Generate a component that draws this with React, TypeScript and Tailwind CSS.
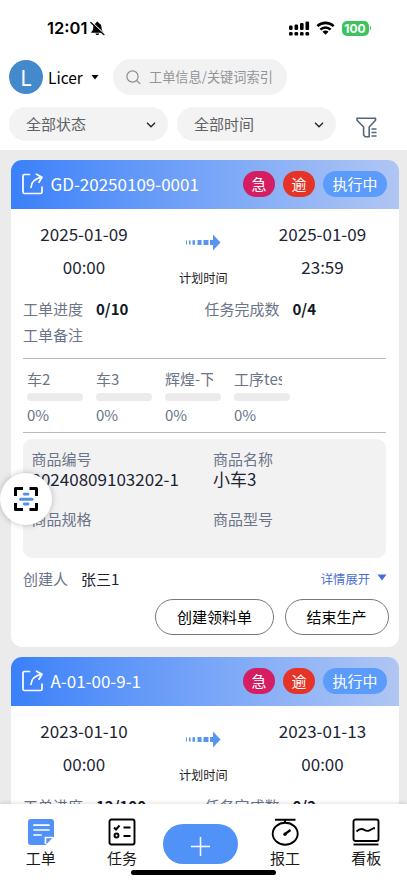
import { useState } from "react";

type Step = { name: string; percent: number };

type WorkOrder = {
  code: string;
  start: [string, string];
  end: [string, string];
  progress: string;
  tasks: string;
  steps: Step[];
  productCode: string;
  productName: string;
  creator: string;
};

const orders: WorkOrder[] = [
  {
    code: "GD-20250109-0001",
    start: ["2025-01-09", "00:00"],
    end: ["2025-01-09", "23:59"],
    progress: "0/10",
    tasks: "0/4",
    steps: [
      { name: "车2", percent: 0 },
      { name: "车3", percent: 0 },
      { name: "辉煌-下", percent: 0 },
      { name: "工序test", percent: 0 },
    ],
    productCode: "20240809103202-1",
    productName: "小车3",
    creator: "张三1",
  },
  {
    code: "A-01-00-9-1",
    start: ["2023-01-10", "00:00"],
    end: ["2023-01-13", "00:00"],
    progress: "12/100",
    tasks: "0/2",
    steps: [],
    productCode: "",
    productName: "",
    creator: "",
  },
];

function StatusBar() {
  return (
    <div className="h-[59px] flex items-start justify-between pl-[47px] pr-[36px] pt-[18px]">
      <div className="flex items-center h-5">
        <span className="font-['Inter'] text-[16.5px] font-semibold">12:01</span>
        <svg className="ml-[3px]" width="15" height="15" viewBox="0 0 15 15">
          <path d="M7.300 .8c.8 0 1.200.5 1.200 1.100 2 .6 3 2.200 3 4.300 0 2.700.7 3.700 2 4.700v.8H1.200v-.8c1.300-1 2-2 2-4.700 0-2.100 1-3.700 3-4.300 0-.6.300-1.100 1.100-1.100zM5.500 12.500h3.700c-.2 1-.9 1.600-1.800 1.600s-1.700-.6-1.900-1.600z" fill="#000" />
          <path d="M1.200 .8l13 12" stroke="#fff" strokeWidth="1.200" />
          <path d="M.8 1.500l13.200 12.200" stroke="#000" strokeWidth="1.200" strokeLinecap="round" />
        </svg>
      </div>
      <div className="flex items-center h-5">
        <svg width="22" height="15" viewBox="0 0 22 15">
          <rect x="1" y="4.500" width="3.600" height="4.500" rx="1.200" />
          <rect x="6.500" y="3.500" width="3.600" height="5.500" rx="1.200" />
          <rect x="12" y="2" width="3.600" height="7" rx="1.200" />
          <rect x="17.500" y="0.500" width="3.600" height="8.500" rx="1.200" />
          <rect x="1" y="11" width="3.600" height="3.600" rx="1.200" />
          <rect x="6.500" y="11" width="3.600" height="3.600" rx="1.200" />
          <rect x="12" y="11" width="3.600" height="3.600" rx="1.200" />
          <rect x="17.500" y="11" width="3.600" height="3.600" rx="1.200" />
        </svg>
        <svg className="ml-[6px]" width="19" height="14" viewBox="0 0 19 14">
          <path d="M1.400 5.200a11.500 11.500 0 0 1 16.200 0" fill="none" stroke="#000" strokeWidth="2.600" />
          <path d="M4.400 8.600a7.200 7.200 0 0 1 10.200 0" fill="none" stroke="#000" strokeWidth="2.600" />
          <path d="M9.500 13.700L6.500 10.700a4.200 4.200 0 0 1 6 0z" />
        </svg>
        <span className="ml-[7px] w-[27px] h-[15px] rounded-[5px] bg-[#3bc45b] text-white font-['Inter'] text-[12px] leading-[15px] font-bold text-center">100</span>
        <span className="ml-px w-[1.5px] h-[4px] rounded-r bg-[#3bc45b]" />
      </div>
    </div>
  );
}

function FilterSelect({ label }: { label: string }) {
  return (
    <button className="w-[159px] h-[34px] rounded-full bg-[#f3f3f3] flex items-center justify-between pl-[17px] pr-[12px] pt-px text-[15px] text-[#606266]">
      {label}
      <svg width="10" height="6" viewBox="0 0 10 6" fill="none" stroke="#222" strokeWidth="1.300">
        <path d="M1 .8l4 4 4-4" />
      </svg>
    </button>
  );
}

function Header() {
  return (
    <header className="h-[150px] shrink-0 bg-white">
      <StatusBar />
      <div className="flex items-center h-9 pl-[9px]">
        <div className="w-[34px] h-[34px] rounded-full bg-[#4489cc] text-white text-[21px] leading-[35px] text-center">L</div>
        <span className="ml-[5px] mt-px w-[34px] text-[15.5px] text-black">Licer</span>
        <svg className="ml-[9px]" width="8" height="5" viewBox="0 0 8 5">
          <path d="M.5 0h7L4 4.500z" />
        </svg>
        <div className="ml-[14px] w-[174px] h-9 rounded-full bg-[#f2f2f2] flex items-center pl-[13px] text-[13.2px] text-[#919499]">
          <svg className="mr-[8px]" width="15" height="15" viewBox="0 0 15 15" fill="none" stroke="#8b8e93" strokeWidth="1.200">
            <circle cx="6.500" cy="6.500" r="5.600" />
            <path d="M10.500 10.500l3.800 3.400" />
          </svg>
          工单信息/关键词索引
        </div>
      </div>
      <div className="flex items-center mt-3 h-[34px] pl-[9px] gap-[9px]">
        <FilterSelect label="全部状态" />
        <FilterSelect label="全部时间" />
        <svg className="ml-[11px] mt-[7px]" width="22" height="22" viewBox="0 0 22 22" fill="none" stroke="#53657d" strokeWidth="1.600">
          <path d="M1 1.300h18.500v2L13.200 10v9.700H9.200L7.600 18V10L1 3.300z" strokeLinejoin="round" />
          <path d="M15.500 12h5M15.500 15.500h5M15.500 19h5" />
        </svg>
      </div>
    </header>
  );
}

function DateBlock({ value }: { value: [string, string] }) {
  return (
    <div className="w-[122px] text-center text-[17px] leading-[33px] text-[#1d2433]">
      <p>{value[0]}</p>
      <p>{value[1]}</p>
    </div>
  );
}

function Field({ label, value }: { label: string; value?: string }) {
  return (
    <div className="h-[60px]">
      <p className="text-[15px] leading-5 text-[#6b7489]">{label}</p>
      {value && <p className="text-[17px] leading-5 text-[#1d2433] whitespace-nowrap">{value}</p>}
    </div>
  );
}

function OrderCard({ order }: { order: WorkOrder }) {
  return (
    <article className="h-[487px] shrink-0 rounded-[11px] bg-white overflow-hidden">
      <div className="h-[48.500px] flex items-center pl-[11px] pr-[12px] bg-linear-to-r from-[#3a80f9] to-[#b0c6f3] text-white">
        <svg width="21" height="22" viewBox="0 0 21 22" fill="none" stroke="#fff" strokeWidth="1.700" strokeLinecap="round" strokeLinejoin="round">
          <path d="M7.500 1.500H2.500a1.500 1.500 0 0 0-1.500 1.500v16a1.500 1.500 0 0 0 1.500 1.500h16a1.500 1.500 0 0 0 1.500-1.500v-5" />
          <path d="M9 14.500c.2-5 3-8.500 10.500-10.300M14.500 1.200l5.500 3-3 5" />
        </svg>
        <span className="ml-[7.500px] flex-1 text-[17px] leading-6">{order.code}</span>
        <div className="flex gap-[8px] text-[15px] leading-[26px] text-center">
          <span className="w-8 h-[26px] rounded-full bg-[#d51d62]">急</span>
          <span className="w-8 h-[26px] rounded-full bg-[#e53427]">逾</span>
          <span className="w-16 h-[26px] rounded-full bg-[#5a9bfb]">执行中</span>
        </div>
      </div>

      <div className="h-[74.500px] flex justify-between pl-[12px] pr-[15.500px] pt-[8.500px]">
        <DateBlock value={order.start} />
        <div className="flex flex-col items-center">
          <svg className="mt-[17px] shrink-0" width="36" height="17" viewBox="0 0 36 17" fill="#5795ee">
            <path d="M1 6.500h1v4H1zM4 6.500h1.600v4H4zM7.500 6.200h2.500v4.600H7.500zM12.500 6h4v5h-4zM18.500 6h5v5h-5zM25 6h3V.5L35.500 8.500 28 16.500V11h-3z" />
          </svg>
          <span className="mt-[17px] text-[12.200px] leading-5 text-[#222]">计划时间</span>
        </div>
        <DateBlock value={order.end} />
      </div>

      <div className="mx-[12px] mt-[13px] text-[15px] leading-[26px] text-[#6b7489]">
        <div className="flex">
          <p className="w-[181.500px]">工单进度<b className="ml-[13px] text-[#111827]">{order.progress}</b></p>
          <p>任务完成数<b className="ml-[13px] text-[#111827]">{order.tasks}</b></p>
        </div>
        <p>工单备注</p>
      </div>

      <div className="ml-[12px] mr-[13px] mt-[10px] h-[75px] border-y border-[#b9b9bb] flex gap-[13.500px] pl-[4px] pt-[10px]">
        {order.steps.map((s) => (
          <div key={s.name} className="w-[55.500px] text-[15px] leading-5 text-[#6b7489]">
            <p className="w-[48px] overflow-hidden whitespace-nowrap">{s.name}</p>
            <div className="mt-[4px] h-2 rounded-full bg-[#ebebeb] overflow-hidden">
              <div className="h-full bg-[#5a9bfb]" style={{ width: `${s.percent}%` }} />
            </div>
            <p className="mt-[4px]">{s.percent}%</p>
          </div>
        ))}
      </div>

      <div className="ml-[12px] mr-[13px] mt-[6px] h-[119px] rounded-[9px] bg-[#f2f2f2] grid grid-cols-[181.500px_1fr] content-start pt-[10px] pl-[8.500px]">
        <Field label="商品编号" value={order.productCode} />
        <Field label="商品名称" value={order.productName} />
        <Field label="商品规格" />
        <Field label="商品型号" />
      </div>

      <div className="mx-[12px] mt-[10px] h-[22px] flex items-center text-[15px] text-[#6b7489]">
        创建人
        <span className="ml-[13px] flex-1 text-[#1d2433]">{order.creator}</span>
        <span className="text-[12.300px] text-[#4a70cf]">详情展开</span>
        <svg className="ml-[7px] mb-[4px]" width="10" height="7" viewBox="0 0 10 7">
          <path d="M.5.500h9L5 6.500z" fill="#3f70d8" />
        </svg>
      </div>

      <div className="mt-[9px] mr-[10.500px] flex justify-end gap-[10.500px] text-[15px] text-black">
        <button className="w-[119px] h-9 rounded-full border border-[#777]">创建领料单</button>
        <button className="w-[104px] h-9 rounded-full border border-[#777]">结束生产</button>
      </div>
    </article>
  );
}

function ScanButton() {
  return (
    <button className="absolute left-0 top-[473px] w-[52px] h-[52px] rounded-full bg-white shadow-[0_0_6px_rgba(0,0,0,0.25)] flex items-center justify-center">
      <svg width="24" height="24" viewBox="0 0 24 24" fill="none">
        <path d="M1.500 9V1.500H9M15.500 1.500h7V9M22.500 16v6.500h-7M9 22.500H1.500V16" stroke="#000" strokeWidth="3" strokeLinejoin="round" />
        <path d="M6.500 12.200h11.500" stroke="#5591e0" strokeWidth="3" strokeLinecap="round" />
        <path d="M10.300 7.200h3.700M10.300 17h3.700" stroke="#5591e0" strokeWidth="2.800" strokeLinecap="round" />
      </svg>
    </button>
  );
}

const tabs = [
  {
    key: "order",
    label: "工单",
    icon: (
      <svg width="28" height="28" viewBox="0 0 28 28" fill="none">
        <path d="M4 1h20a3 3 0 0 1 3 3v14.500L18.500 27H4a3 3 0 0 1-3-3V4a3 3 0 0 1 3-3z" fill="#5092f7" />
        <path d="M7 7.200h15M7 12h15M7 17h7" stroke="#fff" strokeWidth="1.700" strokeLinecap="round" />
        <path d="M18.500 26v-6.500H26" stroke="#fff" strokeWidth="1.700" />
      </svg>
    ),
  },
  {
    key: "task",
    label: "任务",
    icon: (
      <svg width="28" height="28" viewBox="0 0 28 28" fill="none" stroke="#000" strokeWidth="1.900">
        <rect x="1.500" y="1.500" width="25" height="25" rx="2" />
        <path d="M6 9.500l2 2 3.500-4M15.500 9.500h7M15.500 18h7" />
        <circle cx="8.500" cy="17.500" r="2" />
      </svg>
    ),
  },
  { key: "add", label: "", icon: null },
  {
    key: "report",
    label: "报工",
    icon: (
      <svg width="28" height="28" viewBox="0 0 28 28" fill="none" stroke="#000" strokeWidth="1.900">
        <path d="M4 1.800h20.500M14 2v3" />
        <ellipse cx="14.200" cy="15.800" rx="12.500" ry="11" />
        <path d="M14 16l5.500-4" strokeWidth="2.200" />
        <circle cx="14" cy="16.300" r="1.700" fill="#000" stroke="none" />
      </svg>
    ),
  },
  {
    key: "board",
    label: "看板",
    icon: (
      <svg width="28" height="28" viewBox="0 0 28 28" fill="none" stroke="#000" strokeWidth="1.900">
        <rect x="1.500" y="1.500" width="25" height="21.500" rx="2" />
        <path d="M4.500 13.500c3-3 5-3.500 8-1.500s5 .5 9-1.800h1.500" />
        <path d="M1.500 26.500h25" />
      </svg>
    ),
  },
];

function TabBar({ active, onChange }: { active: string; onChange: (key: string) => void }) {
  return (
    <nav className="relative h-[79px] shrink-0 bg-white shadow-[0_-1px_4px_rgba(0,0,0,0.12)]">
      <div className="flex">
        {tabs.map((t) =>
          t.key === "add" ? (
            <button key={t.key} aria-label="新建" className="mt-[20px] mr-[6px] w-[75.500px] h-10 rounded-full bg-[#5092f7] flex items-center justify-center">
              <svg className="mt-[5px]" width="19" height="19" viewBox="0 0 19 19" stroke="#fff" strokeWidth="1.500">
                <path d="M9.500 0v19M0 9.500h19" />
              </svg>
            </button>
          ) : (
            <button
              key={t.key}
              onClick={() => onChange(t.key)}
              aria-pressed={t.key === active}
              className="flex-1 flex flex-col items-center pt-[14px] text-[15px] leading-[22px] text-[#1a1a1a]"
            >
              {t.icon}
              <span className="mt-px">{t.label}</span>
            </button>
          )
        )}
      </div>
      <div className="absolute left-[131px] bottom-[8px] w-[145px] h-[5px] rounded-full bg-black" />
    </nav>
  );
}

export default function App() {
  const [tab, setTab] = useState("order");

  return (
    <div className="relative w-[407px] h-[883px] flex flex-col overflow-hidden bg-[#ebebeb] font-['Noto_Sans_CJK_SC',sans-serif]">
      <Header />
      <main className="flex-1 min-h-0 overflow-hidden flex flex-col gap-[10px] pt-[10px] pl-[11px] pr-[8px]">
        {orders.map((o) => (
          <OrderCard key={o.code} order={o} />
        ))}
      </main>
      <ScanButton />
      <TabBar active={tab} onChange={setTab} />
    </div>
  );
}
